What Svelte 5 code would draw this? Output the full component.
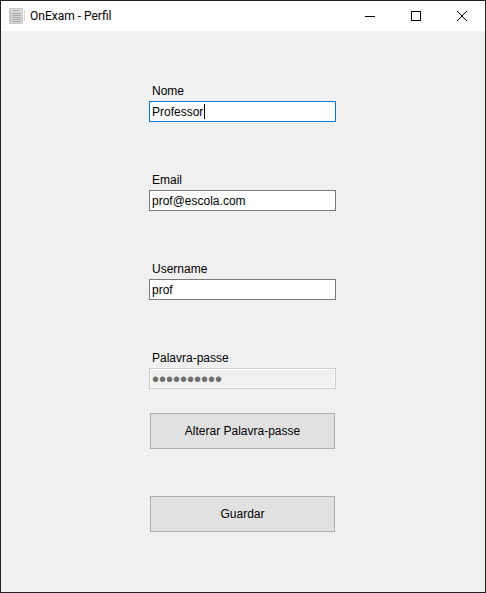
<script>
  import { onMount } from 'svelte';

  let nome = $state('Professor');
  let email = $state('prof@escola.com');
  let username = $state('prof');
  let palavraPasse = $state('professor1');

  let nomeInput;
  let caret = $state(54);

  // The caret is drawn by hand so that it stays solid instead of blinking.
  function placeCaret() {
    const style = getComputedStyle(nomeInput);
    const ctx = document.createElement('canvas').getContext('2d');
    ctx.font = `${style.fontSize} ${style.fontFamily}`;
    const before = nome.slice(0, nomeInput.selectionStart ?? nome.length);
    caret = Math.ceil(ctx.measureText(before).width);
  }

  onMount(() => {
    nomeInput.focus();
    nomeInput.setSelectionRange(nome.length, nome.length);
    placeCaret();
  });
</script>

<div class="window">
  <header class="titlebar">
    <svg class="app-icon" width="16" height="16" viewBox="0 0 16 16" aria-hidden="true" shape-rendering="crispEdges">
      <rect x="0" y="0" width="14" height="16" fill="#cbcbcb" />
      <rect x="1" y="1" width="12" height="14" fill="#d8d8d8" />
      <path d="M4 2.5h6M3 5.5h9M3 7.5h9M3 9.5h9M3 11.5h9M3 13.5h8" stroke="#a9a9a9" />
      <path d="M1.5 4v10" stroke="#b5b5b5" stroke-dasharray="1 1" />
      <path d="M15.5 2v11" stroke="#dedfcb" />
    </svg>
    <h1>OnExam - Perfil</h1>
    <div class="controls">
      <button type="button" aria-label="Minimizar">
        <svg width="10" height="10" viewBox="0 0 10 10" shape-rendering="crispEdges"><path d="M0 5.5h10" /></svg>
      </button>
      <button type="button" aria-label="Maximizar">
        <svg width="10" height="10" viewBox="0 0 10 10" shape-rendering="crispEdges"><path d="M.5.5h9v9h-9z" /></svg>
      </button>
      <button type="button" aria-label="Fechar">
        <svg width="10" height="10" viewBox="0 0 10 10"><path d="M0 0l10 10M10 0L0 10" /></svg>
      </button>
    </div>
  </header>

  <main>
    <form onsubmit={(e) => e.preventDefault()}>
      <div class="field">
        <label for="nome">Nome</label>
        <div class="box">
          <input
            id="nome"
            class="active"
            type="text"
            bind:value={nome}
            bind:this={nomeInput}
            oninput={placeCaret}
            onkeyup={placeCaret}
            onclick={placeCaret}
          />
          <span class="caret" style="margin-left: {caret}px"></span>
        </div>
      </div>
      <div class="field">
        <label for="email">Email</label>
        <input id="email" type="text" bind:value={email} />
      </div>
      <div class="field">
        <label for="username">Username</label>
        <input id="username" type="text" bind:value={username} />
      </div>
      <div class="field">
        <label for="passe">Palavra-passe</label>
        <input id="passe" type="password" bind:value={palavraPasse} disabled />
      </div>
      <button class="action change" type="button">Alterar Palavra-passe</button>
      <button class="action save" type="submit">Guardar</button>
    </form>
  </main>
</div>

<style>
  :global(body) {
    margin: 0;
  }

  .window {
    box-sizing: border-box;
    min-height: 100vh;
    display: flex;
    flex-direction: column;
    border: 1px solid #211f26;
    background: #f0f0f0;
    color: #000;
    font: 12px/16px "Liberation Sans", Arial, sans-serif;
  }

  .titlebar {
    display: flex;
    align-items: center;
    height: 30px;
    padding-left: 8px;
    background: #fff;
  }

  .app-icon {
    margin-right: 5px;
  }

  h1 {
    margin: 0;
    flex: 1;
    font: 400 12px/16px Roboto, "Open Sans", sans-serif;
  }

  .controls {
    display: flex;
  }

  .controls button {
    display: flex;
    align-items: center;
    justify-content: center;
    width: 46px;
    height: 30px;
    padding: 0;
    border: 0;
    background: none;
  }

  .controls svg {
    fill: none;
    stroke: #000;
    stroke-width: 1;
  }

  main {
    display: flex;
    justify-content: center;
    padding: 52px 1px 24px 0;
  }

  form {
    display: flex;
    flex-direction: column;
    width: 187px;
  }

  .field {
    display: flex;
    flex-direction: column;
  }

  .field + .field {
    margin-top: 50px;
  }

  label {
    padding: 0 3px 2px;
  }

  .box {
    position: relative;
    display: flex;
  }

  input {
    box-sizing: border-box;
    width: 100%;
    height: 21px;
    margin: 0;
    padding: 0 2px;
    border: 1px solid #7a7a7a;
    border-radius: 0;
    outline: 0;
    background: #fff;
    color: #000;
    font: inherit;
  }

  input.active {
    border-color: #0078d7;
    caret-color: transparent;
  }

  input:disabled {
    padding-top: 2px;
    border-color: #ccc;
    box-shadow: inset 0 0 0 1px #fff;
    background: #f0f0f0;
    color: #6d6d6d;
    font-size: 20px;
  }

  .caret {
    position: absolute;
    top: 3px;
    left: 3px;
    width: 1px;
    height: 15px;
    background: #000;
    pointer-events: none;
  }

  .action {
    height: 36px;
    margin: 0 1px;
    padding: 0;
    border: 1px solid #adadad;
    border-radius: 0;
    background: #e1e1e1;
    color: #000;
    font: inherit;
  }

  .change {
    margin-top: 24px;
  }

  .save {
    margin-top: 47px;
  }
</style>
